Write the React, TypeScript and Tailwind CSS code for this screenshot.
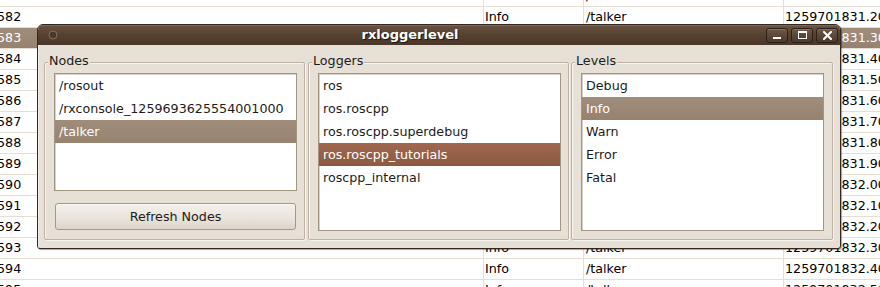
import React from 'react';

const rows = [
  { n: '581', t: '1259701831.1000' },
  { n: '582', t: '1259701831.2000' },
  { n: '583', t: '1259701831.3000', sel: true },
  { n: '584', t: '1259701831.4000' },
  { n: '585', t: '1259701831.5000' },
  { n: '586', t: '1259701831.6000' },
  { n: '587', t: '1259701831.7000' },
  { n: '588', t: '1259701831.8000' },
  { n: '589', t: '1259701831.9000' },
  { n: '590', t: '1259701832.0000' },
  { n: '591', t: '1259701832.1000' },
  { n: '592', t: '1259701832.2000' },
  { n: '593', t: '1259701832.3000' },
  { n: '594', t: '1259701832.4000' },
  { n: '595', t: '1259701832.5000' },
];

type ListProps = { items: string[]; selected?: number; tone?: 'grey' | 'red'; className: string };

const ListBox: React.FC<ListProps> = ({ items, selected, tone = 'grey', className }) => (
  <div className={`bg-white border border-[#a39584] shadow-[inset_1px_1px_0_#d8d0c6] flex flex-col overflow-hidden ${className}`}>
    {items.map((it, i) => {
      const sel = i === selected;
      const selCls =
        tone === 'red'
          ? 'bg-gradient-to-b from-[#a1674e] to-[#8b5942] text-white'
          : 'bg-gradient-to-b from-[#a18d7b] to-[#978270] text-white';
      return (
        <div key={it} className={`h-[23px] shrink-0 flex items-center pl-[4px] whitespace-nowrap ${sel ? selCls : 'text-[#1c1c1c]'}`}>
          {it}
        </div>
      );
    })}
  </div>
);

const GroupBox: React.FC<{ label: string; className: string; children: React.ReactNode }> = ({ label, className, children }) => (
  <div className={`relative border border-[#bfb2a4] shadow-[inset_1px_1px_0_#f7f3ee,1px_1px_0_#f7f3ee] rounded-[2px] pt-[10px] pl-[9px] pb-[8px] flex flex-col ${className}`}>
    <span className="absolute left-[3px] top-[-10px] px-[1px] leading-[16px] bg-[#e7e0d7] text-[#1c1c1c]">{label}</span>
    {children}
  </div>
);

const TitleButton: React.FC<{ children: React.ReactNode }> = ({ children }) => (
  <div className="w-[22px] h-[15px] rounded-[3px] border border-[#2c2119] bg-gradient-to-b from-[#6e5848] to-[#4b392c] shadow-[inset_0_1px_0_#8a7261] flex items-center justify-center">
    {children}
  </div>
);

export default function App() {
  return (
    <div className="relative w-[880px] h-[287px] overflow-hidden bg-white font-['DejaVu_Sans',sans-serif] text-[12.7px]">
      {/* table behind the dialog */}
      <div className="flex flex-col mt-[-14px]">
        {rows.map((r) => (
          <div
            key={r.n}
            className={`flex h-[21px] shrink-0 border-b border-[#e6ddd3] ${r.sel ? 'bg-gradient-to-b from-[#a18d7b] to-[#978270] text-white' : 'text-black'}`}
          >
            <div className="w-[484px] border-r border-[#e6ddd3] flex items-center overflow-hidden">
              <span className="ml-[-3px]">{r.n}</span>
            </div>
            <div className="w-[100px] border-r border-[#e6ddd3] flex items-center pl-[1px]">Info</div>
            <div className="w-[200px] border-r border-[#e6ddd3] flex items-center pl-[2px]">/talker</div>
            <div className="flex-1 flex items-center pl-[1px] whitespace-nowrap overflow-hidden">{r.t}</div>
          </div>
        ))}
      </div>

      {/* rxloggerlevel window */}
      <div className="absolute left-[37px] top-[24px] w-[804px] h-[225px] rounded-t-[6px] rounded-b-[3px] border border-[#33281f] bg-[#e7e0d7] shadow-[1px_1px_1px_rgba(0,0,0,0.35)] flex flex-col overflow-hidden">
        <div className="h-[20px] shrink-0 bg-gradient-to-b from-[#6a5343] via-[#56412f] to-[#4a3729] shadow-[inset_0_1px_0_#7d6656] flex items-center pl-[10px] pr-[2px]">
          <svg width="10" height="10" viewBox="0 0 10 10">
            <circle cx="5" cy="5" r="4" fill="#4a382b" stroke="#86705f" strokeWidth="1" />
          </svg>
          <div className="flex-1 text-center text-white font-bold text-[13px] [text-shadow:1px_1px_1px_#1e150f] pr-[4px]">rxloggerlevel</div>
          <div className="flex gap-[3px]">
            <TitleButton>
              <div className="w-[8px] h-[2px] bg-white mt-[6px]" />
            </TitleButton>
            <TitleButton>
              <div className="w-[9px] h-[8px] border-[1.5px] border-t-[2px] border-white" />
            </TitleButton>
            <TitleButton>
              <svg width="9" height="9" viewBox="0 0 9 9">
                <path d="M1 1 L8 8 M8 1 L1 8" stroke="#fff" strokeWidth="2" strokeLinecap="square" />
              </svg>
            </TitleButton>
          </div>
        </div>

        <div className="flex-1 flex gap-[3px] pl-[5px] pt-[17px] pb-[8px] border-l border-[#f3eee8]">
          <GroupBox label="Nodes" className="w-[261px]">
            <ListBox
              items={['/rosout', '/rxconsole_1259693625554001000', '/talker']}
              selected={2}
              className="w-[243px] h-[118px]"
            />
            <button className="mt-[12px] w-[241px] ml-[1px] h-[27px] rounded-[3px] border border-[#a69887] bg-gradient-to-b from-[#f4f0eb] via-[#ebe5de] to-[#ddd5cb] shadow-[inset_0_1px_0_#fbf9f6] text-[#1c1c1c] text-[12.7px]">
              Refresh Nodes
            </button>
          </GroupBox>
          <GroupBox label="Loggers" className="w-[261px]">
            <ListBox
              items={['ros', 'ros.roscpp', 'ros.roscpp.superdebug', 'ros.roscpp_tutorials', 'roscpp_internal']}
              selected={3}
              tone="red"
              className="w-[243px] flex-1"
            />
          </GroupBox>
          <GroupBox label="Levels" className="w-[262px] ml-[-1px]">
            <ListBox
              items={['Debug', 'Info', 'Warn', 'Error', 'Fatal']}
              selected={1}
              className="w-[243px] flex-1"
            />
          </GroupBox>
        </div>
      </div>
    </div>
  );
}
